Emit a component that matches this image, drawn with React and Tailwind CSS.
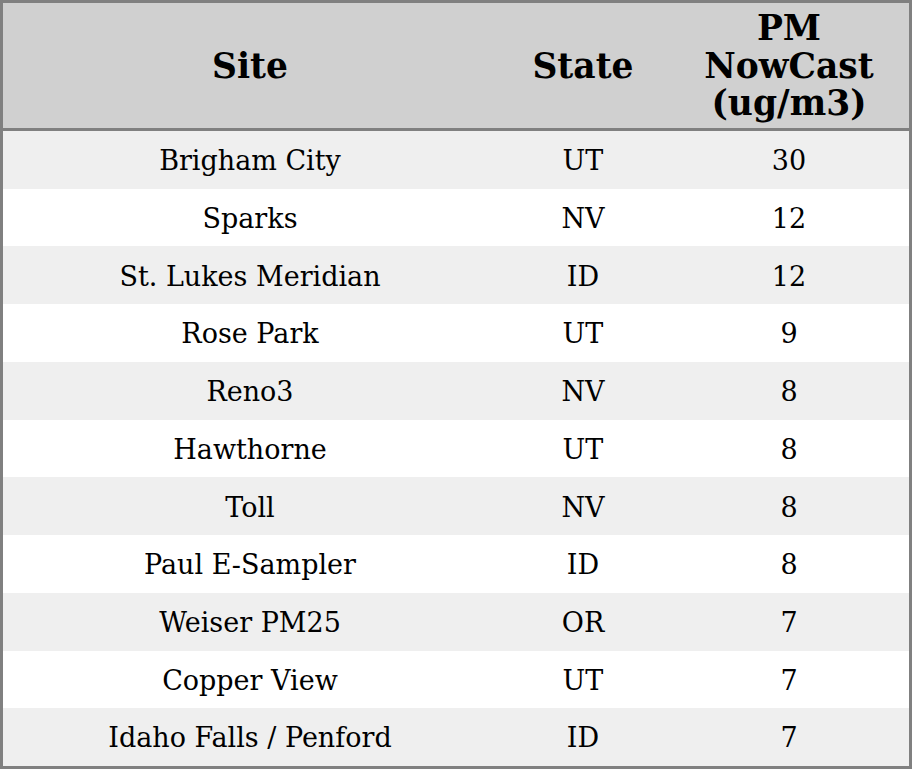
const rows = [
  ['Brigham City', 'UT', '30'],
  ['Sparks', 'NV', '12'],
  ['St. Lukes Meridian', 'ID', '12'],
  ['Rose Park', 'UT', '9'],
  ['Reno3', 'NV', '8'],
  ['Hawthorne', 'UT', '8'],
  ['Toll', 'NV', '8'],
  ['Paul E-Sampler', 'ID', '8'],
  ['Weiser PM25', 'OR', '7'],
  ['Copper View', 'UT', '7'],
  ['Idaho Falls / Penford', 'ID', '7'],
]

export default function App() {
  return (
    <div
      className="w-[912px] h-[769px] border-[3px] border-[#808080] flex flex-col bg-white text-black"
      style={{ fontFamily: '"DejaVu Serif", serif' }}
    >
      <div className="h-[128px] shrink-0 flex pt-[2px] bg-[#d0d0d0] border-b-[3px] border-[#808080] font-bold text-[34.5px] leading-[37.5px]">
        <div className="w-[494px] flex items-center justify-center">Site</div>
        <div className="w-[172px] flex items-center justify-center">State</div>
        <div className="w-[240px] flex flex-col items-center justify-center text-center">
          <span>PM</span>
          <span>NowCast</span>
          <span>(ug/m3)</span>
        </div>
      </div>
      <div className="flex-1 flex flex-col text-[27px]">
        {rows.map((r, i) => (
          <div key={r[0]} className={`flex-1 flex items-center pt-[3px] ${i % 2 === 0 ? 'bg-[#efefef]' : 'bg-white'}`}>
            <div className="w-[494px] text-center">{r[0]}</div>
            <div className="w-[172px] text-center">{r[1]}</div>
            <div className="w-[240px] text-center">{r[2]}</div>
          </div>
        ))}
      </div>
    </div>
  )
}
